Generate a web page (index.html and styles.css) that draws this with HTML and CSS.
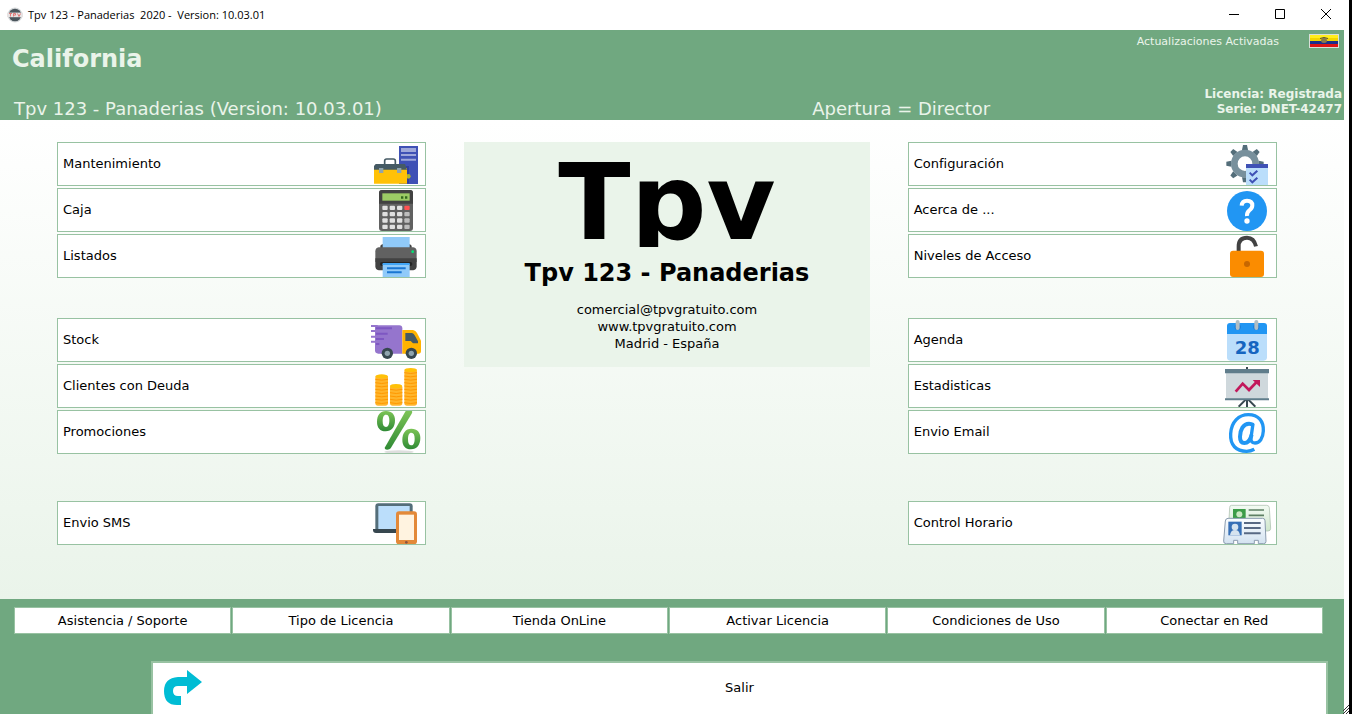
FILE: index.html
```html
<!DOCTYPE html>
<html lang="es">
<head>
<meta charset="utf-8">
<title>Tpv 123 - Panaderias</title>
<link rel="stylesheet" href="styles.css">
</head>
<body>
<div class="window">
  <div class="titlebar">
    <svg class="app-icon" viewBox="0 0 16 16" aria-hidden="true"><circle cx="8" cy="8" r="7.5" fill="#d5d8da"/><circle cx="8" cy="8" r="6.3" fill="#4b555c"/><path d="M0 5.6h16v4.6H0z" fill="#e6e2e2"/><path d="M2 6.5h3M3.500 6.500v3M6.500 9.500v-3h2v1.600h-2M10.500 6.500l1.500 3 1.500-3" fill="none" stroke="#e07a7a"/></svg>
    <span class="window-title">Tpv 123 - Panaderias  2020 -  Version: 10.03.01</span>
    <div class="window-controls">
      <button type="button" aria-label="Minimizar"><svg viewBox="0 0 12 12"><path d="M1 5.500h10"/></svg></button>
      <button type="button" aria-label="Maximizar"><svg viewBox="0 0 12 12"><path d="M1.500 .5h9v9h-9z"/></svg></button>
      <button type="button" aria-label="Cerrar"><svg viewBox="0 0 12 12"><path d="M1 0l10 10M11 0L1 10"/></svg></button>
    </div>
  </div>

  <div class="client">
    <header class="header">
      <div class="header-top">
        <h1 class="shop-name">California</h1>
        <div class="updates">
          <span>Actualizaciones Activadas</span>
          <svg class="flag" viewBox="0 0 30 14" role="img" aria-label="Ecuador"><path fill="#d9dfd9" d="M0 0h30v14H0z"/><path fill="#ffee1c" d="M1 1h28v3H1z"/><path fill="#f2d500" d="M1 4h28v3H1z"/><path fill="#1b2f8c" d="M1 7h28v3H1z"/><path fill="#dc1414" d="M1 10h28v3H1z"/><ellipse cx="15" cy="6.500" rx="3" ry="2.500" fill="#8a7a4a"/><path d="M11 4.500q4-2 8 0" fill="none" stroke="#55503a"/></svg>
        </div>
      </div>
      <div class="header-bottom">
        <span>Tpv 123 - Panaderias (Version: 10.03.01)</span>
        <span>Apertura = Director</span>
        <div class="license">Licencia: Registrada<br>Serie: DNET-42477</div>
      </div>
    </header>

    <main class="main">
      <nav class="menu" aria-label="Gestión">
        <div class="group">
          <button type="button" class="item">Mantenimiento
            <svg viewBox="30 15 162 126"><path fill="#3f51b5" d="M117 24h57v114h-57z"/><path fill="#9fa8da" d="M123 30h45v12h-45zM123 48h45v6h-45zM123 62h45v6h-45z"/><path d="M74 80V69q0-6 6-6h20q6 0 6 6v11" fill="none" stroke="#455a64" stroke-width="5"/><path fill="#303f9f" d="M138 84h9v52h-9z"/><circle cx="145" cy="115" r="7" fill="#afb42b"/><path fill="#ffc107" d="M42 90h99v47H42z"/><path fill="#455a64" d="M47 78h88l6 17H42V84z"/><path fill="#90a4ae" d="M57 90h13v15H57zM111 90h13v15h-13z"/></svg>
          </button>
          <button type="button" class="item">Caja
            <svg viewBox="30 153 162 126"><rect x="57" y="156" width="102" height="123" rx="9" fill="#616161"/><path fill="#424242" d="M57 197v-32q0-9 9-9h84q9 0 9 9v32z"/><path fill="#9ccc65" d="M67 166h82v22H67z"/><path fill="#33691e" d="M123 175h7v7h-7zM135 175h7v7h-7z"/><g fill="#e0e0e0"><rect x="67" y="203" width="16" height="13" rx="3"/><rect x="89" y="203" width="16" height="13" rx="3"/><rect x="111" y="203" width="16" height="13" rx="3"/><rect x="67" y="222" width="16" height="13" rx="3"/><rect x="89" y="222" width="16" height="13" rx="3"/><rect x="111" y="222" width="16" height="13" rx="3"/><rect x="67" y="241" width="16" height="13" rx="3"/><rect x="89" y="241" width="16" height="13" rx="3"/><rect x="111" y="241" width="16" height="13" rx="3"/><rect x="67" y="260" width="16" height="13" rx="3"/><rect x="89" y="260" width="16" height="13" rx="3"/><rect x="111" y="260" width="16" height="13" rx="3"/></g><rect x="133" y="203" width="16" height="13" rx="3" fill="#ff5252"/><g fill="#bdbdbd"><rect x="133" y="222" width="16" height="13" rx="3"/><rect x="133" y="241" width="16" height="13" rx="3"/><rect x="133" y="260" width="16" height="13" rx="3"/></g></svg>
          </button>
          <button type="button" class="item">Listados
            <svg viewBox="30 294 162 126"><path fill="#424242" d="M61 334v-8l5-4h84l5 4v8z"/><path fill="#90caf9" d="M68 300h81v34H68z"/><path fill="#616161" d="M56 331h104q10 2 10 12v32H46v-32q0-10 10-12z"/><path fill="#424242" d="M46 364h124v24q0 10-10 12H56q-10-2-10-12z"/><rect x="60" y="375" width="97" height="12" rx="6" fill="#242424"/><path fill="#90caf9" d="M68 381h81v39H68z"/><path fill="#42a5f5" d="M68 378h81v6H68z"/><path fill="#1976d2" d="M81 391h56v6H81zM81 403h44v6H81z"/><circle cx="158" cy="344" r="4" fill="#00e676"/></svg>
          </button>
        </div>
        <div class="group">
          <button type="button" class="item">Stock
            <svg viewBox="30 15 162 126"><path fill="#9575cd" d="M45 34h73q9 0 9 9v76H55q-10 0-10-10z"/><path fill="#9575cd" d="M33 33h20v6H33zM33 48h20v6H33zM33 65h20v6H33zM33 80h20v6H33z"/><path d="M48 43h48M48 59h35M48 75h24M48 90h10" stroke="#7e57c2" stroke-width="6"/><path fill="#ffb300" d="M127 48h32q8 2 12 9l12 23v31q0 8-8 8h-48z"/><path fill="#455a64" d="M136 57h20q5 1 8 7l10 18v6h-15l-7-7h-16z"/><g fill="#37474f"><circle cx="82" cy="118" r="17"/><circle cx="154" cy="118" r="17"/></g><g fill="#90a4ae"><circle cx="82" cy="118" r="8"/><circle cx="154" cy="118" r="8"/></g></svg>
          </button>
          <button type="button" class="item">Clientes con Deuda
            <svg viewBox="30 153 162 126"><g fill="#ffb52b"><rect x="46" y="184" width="38" height="91" rx="8"/><rect x="90" y="212" width="37" height="63" rx="8"/><rect x="133" y="165" width="38" height="110" rx="8"/></g><g fill="none" stroke="#ff9800" stroke-width="3"><path d="M46 196q19 5 38 0M46 206q19 5 38 0M46 216q19 5 38 0M46 226q19 5 38 0M46 236q19 5 38 0M46 246q19 5 38 0M46 256q19 5 38 0M46 266q19 5 38 0M90 226q19 5 37 0M90 236q19 5 37 0M90 246q19 5 37 0M90 256q19 5 37 0M90 266q19 5 37 0M133 176q19 5 38 0M133 186q19 5 38 0M133 196q19 5 38 0M133 206q19 5 38 0M133 216q19 5 38 0M133 226q19 5 38 0M133 236q19 5 38 0M133 246q19 5 38 0M133 256q19 5 38 0M133 266q19 5 38 0"/></g><g fill="#ffc107"><ellipse cx="65" cy="187" rx="19" ry="6"/><ellipse cx="108" cy="216" rx="18" ry="6"/><ellipse cx="152" cy="168" rx="19" ry="6"/></g></svg>
          </button>
          <button type="button" class="item">Promociones
            <svg viewBox="30 288 162 126"><defs><linearGradient id="pct" x1="0" y1="0" x2="0" y2="1"><stop offset="0" stop-color="#7cc456"/><stop offset="1" stop-color="#2f8a35"/></linearGradient></defs><ellipse cx="117" cy="411" rx="44" ry="5" fill="#dedede"/><path fill="url(#pct)" fill-rule="evenodd" d="M78 288c18 0 27 11 27 28 0 20-10 33-28 33-17 0-26-11-26-29 0-19 9-32 27-32zm0 11c-7 0-10 8-10 20 0 11 3 17 10 17s10-8 10-20c0-11-3-17-10-17z"/><path fill="url(#pct)" d="M137 288h19q2 3-1 8L92 400q-3 4-10 4-10 0-7-7z"/><path fill="url(#pct)" fill-rule="evenodd" d="M154 341c18 0 27 11 27 28 0 20-10 34-28 34-17 0-26-11-26-29 0-19 9-33 27-33zm0 12c-7 0-10 8-10 20s3 18 10 18 10-8 10-20-3-18-10-18z"/></svg>
          </button>
        </div>
        <div class="group">
          <button type="button" class="item">Envio SMS
            <svg viewBox="30 21 162 126"><path fill="#546e7a" d="M46 105V34q0-9 9-9h94q9 0 9 9v71z"/><path fill="#bbdefb" d="M55 33h94v70H55z"/><path fill="#37474f" d="M39 102h81v12H48q-9 0-9-9z"/><rect x="108" y="49" width="63" height="99" rx="9" fill="#e38939"/><path fill="#fff3e0" d="M117 59h45v76h-45z"/><circle cx="139" cy="142" r="4" fill="#8a5340"/></svg>
          </button>
        </div>
      </nav>

      <section class="card">
        <p class="card-logo">Tpv</p>
        <h2 class="card-title">Tpv 123 - Panaderias</h2>
        <p class="card-contact">comercial@tpvgratuito.com<br>www.tpvgratuito.com<br>Madrid - España</p>
      </section>

      <nav class="menu" aria-label="Opciones">
        <div class="group">
          <button type="button" class="item">Configuración
            <svg viewBox="33 15 162 126"><g fill="#546e7a"><path id="tooth" d="M96 36l3-15h12l3 15z"/><use href="#tooth" transform="rotate(45 105 77)"/><use href="#tooth" transform="rotate(90 105 77)"/><use href="#tooth" transform="rotate(135 105 77)"/><use href="#tooth" transform="rotate(180 105 77)"/><use href="#tooth" transform="rotate(225 105 77)"/><use href="#tooth" transform="rotate(270 105 77)"/><use href="#tooth" transform="rotate(315 105 77)"/></g><circle cx="105" cy="77" r="32" fill="none" stroke="#78909c" stroke-width="20"/><path fill="#bbdefb" d="M108 84h66v57h-66z"/><path fill="#3f51b5" d="M108 78h66v12h-66z"/><path d="M119 104l8 8 15-14M119 125l8 8 15-14" fill="none" stroke="#3f51b5" stroke-width="6"/></svg>
          </button>
          <button type="button" class="item">Acerca de ...
            <svg viewBox="33 153 162 126"><circle cx="111" cy="219" r="60" fill="#2196f3"/><path d="M95 203q1-15 16-15 16 0 16 14 0 9-9 15-8 6-7 17" fill="none" stroke="#fff" stroke-width="12"/><circle cx="111" cy="249" r="8" fill="#fff"/></svg>
          </button>
          <button type="button" class="item">Niveles de Acceso
            <svg viewBox="33 294 162 126"><path d="M86 345v-17q0-26 25-26 21 0 27 26" fill="none" stroke="#424242" stroke-width="12"/><rect x="60" y="341" width="102" height="79" rx="9" fill="#fb8c00"/><circle cx="111" cy="381" r="9" fill="#c76700"/></svg>
          </button>
        </div>
        <div class="group">
          <button type="button" class="item">Agenda
            <svg viewBox="33 15 162 126"><path fill="#bbdefb" d="M51 57h120v73q0 10-10 10H61q-10 0-10-10z"/><path fill="#2196f3" d="M51 60V36q0-9 9-9h102q9 0 9 9v24z"/><circle cx="83" cy="39" r="9" fill="#1976d2"/><circle cx="139" cy="39" r="9" fill="#1976d2"/><path d="M83 24v18M139 24v18" stroke="#b0bec5" stroke-width="12" stroke-linecap="round"/><text x="112" y="121" class="day">28</text></svg>
          </button>
          <button type="button" class="item">Estadisticas
            <svg viewBox="33 153 162 126"><path d="M111 159v12M111 257v22M107 257l-21 21M115 257l21 21" stroke="#37474f" stroke-width="6"/><path fill="#cfd8dc" d="M48 174h126v84H48z"/><path fill="#607d8b" d="M45 165h132v13H45zM45 253h132v6H45z"/><path d="M77 233l21-24 19 19 23-24" fill="none" stroke="#c2185b" stroke-width="8"/><path fill="#c2185b" d="M128 198h22v21z"/></svg>
          </button>
          <button type="button" class="item">Envio Email
            <svg viewBox="33 288 162 126"><g fill="none" stroke="#2196f3"><path d="M133 403q-11 6-23 6c-32 0-50-19-48-53 2-36 25-57 53-57 31 0 46 20 45 49-1 22-11 36-25 36-11 0-13-8-12-16l6-42" stroke-width="10"/><path d="M130 330q-6-4-13-4c-17 0-27 18-27 39 0 12 5 19 13 19 11 0 18-10 22-25" stroke-width="12"/></g></svg>
          </button>
        </div>
        <div class="group">
          <button type="button" class="item">Control Horario
            <svg viewBox="33 21 162 126"><defs><linearGradient id="cg" x1="0" y1="0" x2="0" y2="1"><stop offset="0" stop-color="#f3fbf3"/><stop offset="1" stop-color="#cfe6cd"/></linearGradient><linearGradient id="cb" x1="0" y1="0" x2="0" y2="1"><stop offset="0" stop-color="#fafdff"/><stop offset="1" stop-color="#d3e2f0"/></linearGradient></defs><path d="M64 31h106q7 0 8 7l4 62q0 8-8 8H55l4-70q0-7 5-7z" fill="url(#cg)" stroke="#a3b8a6" stroke-width="2"/><path fill="#3c9c47" d="M69 42h38v30H69z"/><circle cx="88" cy="58" r="9" fill="#cbe8c2"/><path d="M116 45h46M116 61h46M130 76h34" stroke="#5e8064" stroke-width="5"/><path d="M54 70h104q7 0 7 7l3 62q0 7-7 7h-16v-10h-12v10H83v-10H71v10H49q-9 0-8-8l5-60q1-8 8-8z" fill="url(#cb)" stroke="#8b9caf" stroke-width="3"/><path fill="#366fb6" d="M55 80h40v41H55z"/><circle cx="75" cy="96" r="10" fill="#d5e3ef"/><path fill="#d5e3ef" d="M60 121q2-16 15-16t15 16z"/><path d="M102 84h50M102 99h50M102 115h50" stroke="#586984" stroke-width="6"/></svg>
          </button>
        </div>
      </nav>
    </main>

    <footer class="footer">
      <nav class="links" aria-label="Enlaces">
        <button type="button">Asistencia / Soporte</button>
        <button type="button">Tipo de Licencia</button>
        <button type="button">Tienda OnLine</button>
        <button type="button">Activar Licencia</button>
        <button type="button">Condiciones de Uso</button>
        <button type="button">Conectar en Red</button>
      </nav>
      <button type="button" class="exit">
        <svg viewBox="0 0 38 36" aria-hidden="true"><path fill="#00bcd4" d="M23 0l15 12-15 12v-8h-9q-5 0-5 5t5 5h3v9h-4Q0 35 0 21 0 8 14 7h9z"/></svg>
        <span>Salir</span>
      </button>
    </footer>
  </div>
  <svg class="grip" viewBox="0 0 6 9" aria-hidden="true"><path d="M0 6l6-6M0 9l6-6M3 9l3-3" stroke="#333" fill="none"/></svg>
</div>
</body>
</html>
```
FILE: styles.css
```css
* { box-sizing: border-box; }

body {
  margin: 0;
  background: #fff;
  color: #000;
  font: 13px/16px Verdana, "DejaVu Sans", sans-serif;
}

h1, h2, p { margin: 0; }

button {
  font: inherit;
  color: inherit;
  background: #fff;
  border: 1px solid #98c2a2;
  border-radius: 0;
  cursor: pointer;
}

.window {
  position: relative;
  display: flex;
  flex-direction: column;
  height: 100vh;
  border-right: 3px solid #000;
  overflow: hidden;
}

/* Title bar */
.titlebar {
  display: flex;
  align-items: center;
  flex: none;
  height: 30px;
  padding: 0 10px 0 7px;
}

.app-icon { width: 16px; height: 16px; margin-right: 5px; }

.window-title {
  flex: 1;
  font: 11px/16px "Open Sans", sans-serif;
  white-space: pre;
}

.window-controls { display: flex; gap: 20px; }

.window-controls button {
  display: flex;
  align-items: center;
  justify-content: center;
  width: 26px;
  height: 26px;
  padding: 0;
  border: 0;
}

.window-controls svg {
  width: 12px;
  height: 12px;
  fill: none;
  stroke: #000;
}

.client {
  display: flex;
  flex-direction: column;
  flex: 1;
  min-height: 0;
  margin-right: 5px;
}

/* Header */
.header {
  display: flex;
  flex-direction: column;
  justify-content: space-between;
  flex: none;
  height: 90px;
  padding: 4px 2px 2px 12px;
  background: #70a880;
  color: #eaf4ea;
}

.header-top {
  display: flex;
  justify-content: space-between;
}

.shop-name { padding-top: 11px; font-size: 24px; line-height: 28px; }

.updates {
  display: flex;
  align-items: flex-start;
  gap: 30px;
  padding-right: 3px;
  font-size: 11px;
}

.flag { width: 30px; height: 14px; }

.header-bottom {
  display: grid;
  grid-template-columns: 800fr 393fr auto;
  align-items: end;
  padding-left: 2px;
  font-size: 18px;
  line-height: 18px;
}

.license {
  font-size: 12px;
  font-weight: bold;
  line-height: 15px;
  padding-bottom: 1px;
  text-align: right;
}

/* Menus and card */
.main {
  display: grid;
  grid-template-columns: 369fr 405fr 369fr;
  column-gap: 38px;
  align-items: start;
  flex: 1;
  padding: 22px 67px 0 57px;
  background: linear-gradient(#fff, #eaf4ea);
}

.menu { display: flex; flex-direction: column; gap: 40px; }

.group { display: flex; flex-direction: column; gap: 2px; }

.group:last-child { padding-top: 7px; }

.item {
  display: flex;
  align-items: center;
  justify-content: space-between;
  height: 44px;
  padding: 0 1px 0 5px;
  text-align: left;
}

.item svg { width: 54px; height: 42px; }

.day {
  font: bold 54px "DejaVu Sans", sans-serif;
  fill: #1565c0;
  text-anchor: middle;
}

.card {
  min-height: 225px;
  background: #eaf4ea;
  text-align: center;
}

.card-logo {
  height: 105px;
  padding-top: 17px;
  overflow: hidden;
  font-size: 106px;
  font-weight: bold;
  line-height: 88px;
}

.card-title { padding-top: 12px; font-size: 24px; line-height: 28px; }

.card-contact { padding-top: 14px; line-height: 17px; }

/* Footer */
.footer {
  display: flex;
  flex-direction: column;
  gap: 27px;
  flex: none;
  height: 115px;
  padding: 8px 16px 0 14px;
  background: #70a880;
}

.links {
  display: grid;
  grid-template-columns: repeat(6, 1fr);
  gap: 1px;
  padding-right: 5px;
}

.links button { height: 27px; padding: 0; }

.exit {
  display: grid;
  grid-template-columns: 1fr auto 1fr;
  align-items: center;
  flex: 1;
  margin-left: 137px;
  padding: 0 11px 1px;
  border-width: 2px 2px 0;
}

.exit svg { width: 38px; height: 36px; }

.grip {
  position: absolute;
  right: 0;
  bottom: 0;
  width: 6px;
  height: 9px;
}
```
